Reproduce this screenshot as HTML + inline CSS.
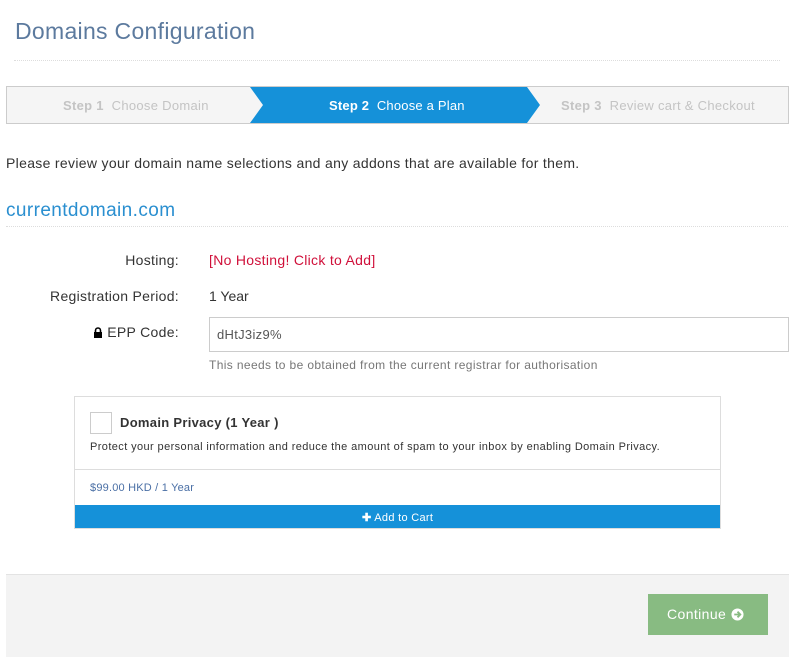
<!DOCTYPE html>
<html><head><style>
body{margin:0;width:796px;height:672px;background:#fff;font-family:"Liberation Sans",sans-serif;position:relative;overflow:hidden;color:#333}
.a{position:absolute;white-space:nowrap}
</style></head><body>
<div class="a" style="left:15px;top:18px;font-size:23px;color:#5c7a9e;letter-spacing:0.3px">Domains Configuration</div>
<div class="a" style="left:14px;top:60px;width:766px;border-top:1px dotted #ddd"></div>

<div class="a" style="left:6px;top:86px;width:781px;height:36px;background:#f5f5f5;border:1px solid #ccc"></div>
<svg class="a" style="left:250px;top:87px" width="292" height="36"><polygon points="0,0 277,0 290,18 277,36 0,36 13,18" fill="#1591d9"/></svg>
<div class="a" style="left:63px;top:98px;font-size:13px;color:#c4c4c4;letter-spacing:0.3px"><b>Step 1</b>&nbsp; Choose Domain</div>
<div class="a" style="left:329px;top:98px;font-size:13px;color:#fff;letter-spacing:0.2px"><b>Step 2</b>&nbsp; Choose a Plan</div>
<div class="a" style="left:561px;top:98px;font-size:13px;color:#c4c4c4;letter-spacing:0.3px"><b>Step 3</b>&nbsp; Review cart &amp; Checkout</div>

<div class="a" style="left:6px;top:155px;font-size:14px;color:#333;letter-spacing:0.32px">Please review your domain name selections and any addons that are available for them.</div>
<div class="a" style="left:6px;top:200px;font-size:19px;color:#2a8fd0;letter-spacing:0.4px">currentdomain.com</div>
<div class="a" style="left:6px;top:226px;width:782px;border-top:1px dotted #ddd"></div>

<div class="a" style="right:617px;top:252px;font-size:14px;letter-spacing:0.3px">Hosting:</div>
<div class="a" style="left:209px;top:252px;font-size:14px;color:#d0103a;letter-spacing:0.3px">[No Hosting! Click to Add]</div>
<div class="a" style="right:617px;top:288px;font-size:14px;letter-spacing:0.3px">Registration Period:</div>
<div class="a" style="left:209px;top:288px;font-size:14px">1 Year</div>
<div class="a" style="right:617px;top:324px;font-size:14px;letter-spacing:0.3px"><svg width="10" height="11" viewBox="0 0 10 11" style="vertical-align:-1px"><path d="M2.5 5V3.5a2.5 2.5 0 0 1 5 0V5" stroke="#000" stroke-width="1.6" fill="none"/><rect x="1" y="5" width="8" height="6" fill="#000"/></svg> EPP Code:</div>
<div class="a" style="left:209px;top:317px;width:578px;height:33px;border:1px solid #ccc"></div>
<div class="a" style="left:217px;top:327px;font-size:13px;color:#555;letter-spacing:0.3px">dHtJ3iz9%</div>
<div class="a" style="left:209px;top:358px;font-size:12px;color:#777;letter-spacing:0.37px">This needs to be obtained from the current registrar for authorisation</div>

<div class="a" style="left:74px;top:396px;width:645px;height:131px;border:1px solid #ddd"></div>
<div class="a" style="left:90px;top:412px;width:20px;height:20px;border:1px solid #ccc"></div>
<div class="a" style="left:120px;top:415px;font-size:13px;font-weight:bold;letter-spacing:0.3px">Domain Privacy (1 Year )</div>
<div class="a" style="left:90px;top:441px;font-size:11px;color:#333;letter-spacing:0.4px">Protect your personal information and reduce the amount of spam to your inbox by enabling Domain Privacy.</div>
<div class="a" style="left:75px;top:469px;width:645px;border-top:1px solid #ddd"></div>
<div class="a" style="left:90px;top:482px;font-size:11px;color:#4a6fa5;letter-spacing:0.2px">$99.00 HKD / 1 Year</div>
<div class="a" style="left:75px;top:505px;width:645px;height:23px;background:#1591d9"></div>
<div class="a" style="left:362px;top:511px;font-size:11px;color:#fff;letter-spacing:0.3px"><b>✚</b> Add to Cart</div>

<div class="a" style="left:6px;top:574px;width:783px;height:82px;background:#f3f3f3;border-top:1px solid #e3e3e3"></div>
<div class="a" style="left:648px;top:594px;width:120px;height:41px;background:#88bb82"></div>
<div class="a" style="left:667px;top:606px;font-size:14px;color:#fff;letter-spacing:0.4px">Continue <svg width="13" height="13" viewBox="0 0 14 14" style="vertical-align:-2px"><circle cx="7" cy="7" r="6.5" fill="#fff"/><path d="M3.5 7h6M7 4l3 3-3 3" stroke="#88bb82" stroke-width="2" fill="none"/></svg></div>
</body></html>
